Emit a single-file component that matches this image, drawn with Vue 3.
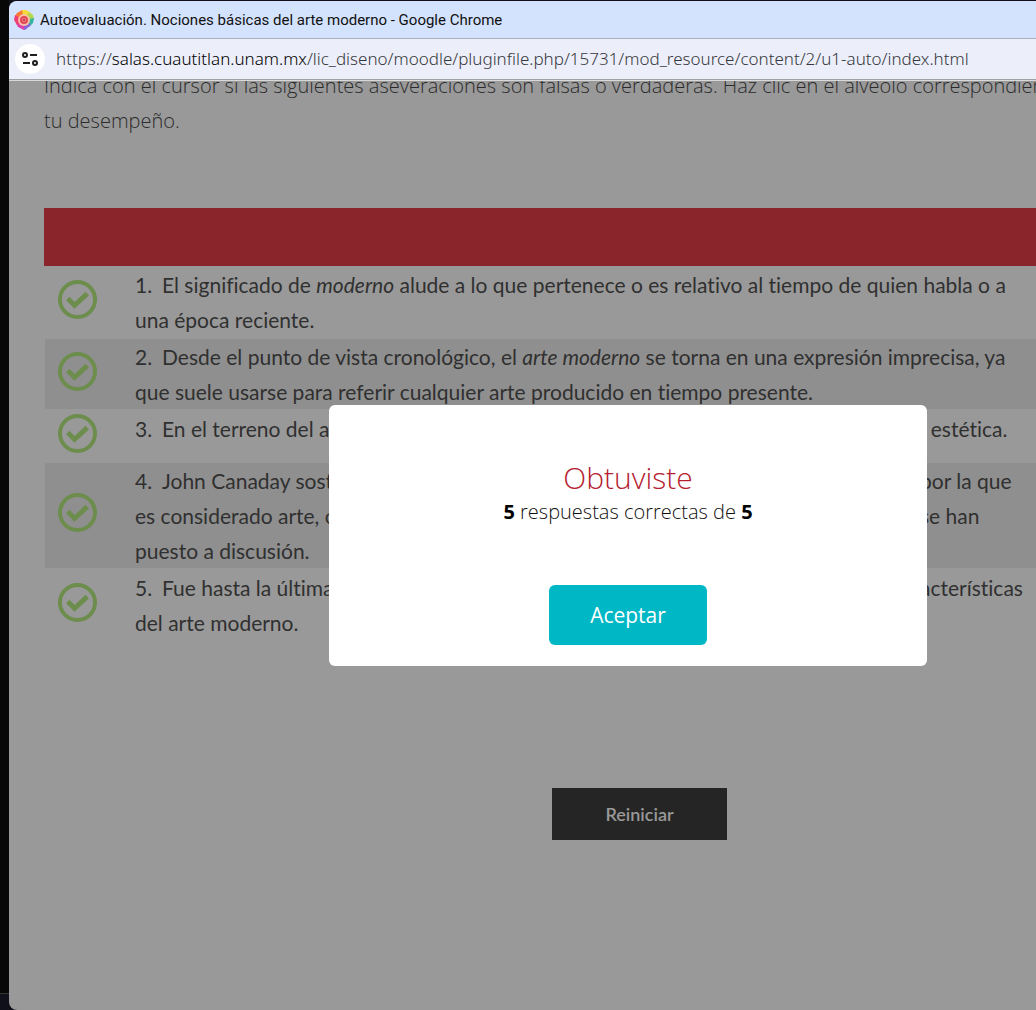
<script setup>
const questions = [
  {
    lines: [
      [{ t: 'El significado de ' }, { t: 'moderno', em: true }, { t: ' alude a lo que pertenece o es relativo al tiempo de quien habla o a' }],
      [{ t: 'una época reciente.' }],
    ],
  },
  {
    lines: [
      [{ t: 'Desde el punto de vista cronológico, el ' }, { t: 'arte moderno', em: true }, { t: ' se torna en una expresión imprecisa, ya' }],
      [{ t: 'que suele usarse para referir cualquier arte producido en tiempo presente.' }],
    ],
  },
  { lines: [[{ t: 'En el terreno del arte, lo moderno se refiere a una', tail: '\u00a0 estética.' }]] },
  {
    lines: [
      [{ t: 'John Canaday sostiene que el arte moderno es una etapa', tail: 'por la que' }],
      [{ t: 'es considerado arte, con los valores que en la época', tail: 'se han' }],
      [{ t: 'puesto a discusión.' }],
    ],
  },
  {
    lines: [
      [{ t: 'Fue hasta la última década cuando se definieron las car', tail: 'acterísticas' }],
      [{ t: 'del arte moderno.' }],
    ],
  },
]
</script>

<template>
  <div class="desktop">
    <div class="window">
      <header class="titlebar">
        <svg class="favicon" viewBox="0 0 20 20" aria-hidden="true">
          <path d="M10 10 1 6 3 3 8 0 11 1Z" fill="#fa7a38" />
          <path d="M10 10 8 0 12 0 17 3Z" fill="#f5d936" />
          <path d="M10 10 15 2 19 5 20 10Z" fill="#b4d84a" />
          <path d="M10 10 20 8 19 13 15 17Z" fill="#35b5a0" />
          <path d="M10 10 17 15 11 20 8 19Z" fill="#8a62d8" />
          <path d="M10 10 10 20 4 17 2 13Z" fill="#df3fa8" />
          <path d="M10 10 3 15 0 10 1 5Z" fill="#ee4074" />
          <circle cx="10" cy="10" r="6" fill="#f9c0a8" />
          <circle cx="10" cy="10" r="3" fill="#f28a8a" stroke="#e04656" stroke-width="2" />
          <circle cx="10" cy="10" r="1" fill="#b02838" />
        </svg>
        <span>Autoevaluación. Nociones básicas del arte moderno - Google Chrome</span>
      </header>
      <div class="addressbar">
        <button class="site" type="button" aria-label="Información del sitio">
          <svg viewBox="0 0 16 16" fill="none" stroke="#1f1f1f" stroke-width="2">
            <circle cx="3" cy="4" r="2" /><path d="M8 4h7M1 12h7" /><circle cx="13" cy="12" r="2" />
          </svg>
        </button>
        <span class="url">https://<b>salas.cuautitlan.unam.mx</b>/lic_diseno/moodle/pluginfile.php/15731/mod_resource/content/2/u1-auto/index.html</span>
      </div>

      <main class="page">
        <p class="intro">
          Indica con el cursor si las siguientes aseveraciones son falsas o verdaderas. Haz clic en el alveolo correspondiente<br>
          tu desempeño.
        </p>
        <div class="band"></div>
        <table class="quiz">
          <tbody>
            <tr v-for="(q, i) in questions" :key="i">
              <td class="mark">
                <svg viewBox="0 0 40 40" fill="none" stroke="#6c8d4c" role="img" aria-label="Correcto">
                  <circle cx="20" cy="20" r="18" stroke-width="4" />
                  <path d="M10 19 17 26 30 14" stroke-width="5" />
                </svg>
              </td>
              <td class="statement">
                <div v-for="(line, n) in q.lines" :key="n" class="line">
                  <span class="lead"><span v-if="n === 0" class="num">{{ i + 1 }}.</span><template v-for="(part, k) in line" :key="k"><em v-if="part.em">{{ part.t }}</em><template v-else>{{ part.t }}</template></template></span>
                  <span v-if="line[0].tail" class="tail">{{ line[0].tail }}</span>
                </div>
              </td>
            </tr>
          </tbody>
        </table>
        <button class="restart" type="button">Reiniciar</button>
      </main>
    </div>

    <section class="dialog" role="dialog" aria-labelledby="result">
      <h2 id="result">Obtuviste</h2>
      <p><strong>5</strong> respuestas correctas de <strong>5</strong></p>
      <button type="button">Aceptar</button>
    </section>
  </div>
</template>

<style>
body { margin: 0; background: #070707; }
</style>

<style scoped>
.desktop {
  position: relative;
  box-sizing: border-box;
  min-height: 100vh;
  padding: 1px 0 0 9px;
  display: flex;
  background: linear-gradient(#070707, #070707) 0 0 / 9px calc(100% - 17px) no-repeat, linear-gradient(#333, #333) 0 calc(100% - 16px) / 9px 1px no-repeat, #10101a;
  font-family: "Open Sans", "Noto Sans", sans-serif;
  overflow: hidden;
}
.window {
  flex: 1;
  min-width: 0;
  display: flex;
  flex-direction: column;
  border-radius: 8px 0 0 8px;
  overflow: hidden;
  background: #999;
}
.titlebar {
  height: 37px;
  display: flex;
  align-items: center;
  gap: 6px;
  padding-left: 5px;
  background: #d3e2fd;
  border-bottom: 1px solid #a9afbd;
  color: #111;
  font: 15px/20px Roboto, sans-serif;
  white-space: nowrap;
}
.favicon { width: 20px; height: 20px; }
.addressbar {
  height: 40px;
  display: flex;
  align-items: center;
  gap: 11px;
  padding-left: 6px;
  background: #eceef9;
  border-bottom: 1px solid #a0a0a4;
  color: #36393d;
  white-space: nowrap;
}
.site {
  flex: none;
  width: 30px;
  height: 30px;
  display: grid;
  place-items: center;
  padding: 0;
  border: 0;
  border-radius: 50%;
  background: #fff;
}
.site svg { width: 16px; height: 16px; }
.url { font: 300 17px/24px "Noto Sans", sans-serif; }
.url b { font-weight: 300; color: #000; }
.page {
  flex: 1;
  display: flex;
  flex-direction: column;
  padding-left: 35px;
  border-top: 1px solid #d8d8d8;
  color: #2b2b2b;
}
.intro {
  height: 57px;
  margin: 0 0 70px;
  display: flex;
  align-items: flex-end;
  overflow: hidden;
  font-size: 20px;
  font-weight: 300;
  line-height: 35px;
  white-space: nowrap;
}
.band { height: 58px; background: #8a252c; }
.quiz {
  margin: -1px 0 0 1px;
  border-spacing: 0 2px;
  table-layout: fixed;
  width: calc(100% - 1px);
  color: #303030;
  font: 21px/35px Lato, sans-serif;
  font-variant-ligatures: none;
}
.quiz td { padding: 0; }
.quiz tr:nth-child(even) { background: #8f8f8f; }
.quiz tr:nth-child(3) td { height: 50px; }
.mark { width: 90px; vertical-align: middle; }
.mark svg { display: block; width: 39px; height: 39px; margin: -6px 0 0 13px; }
.statement { vertical-align: top; }
.line { display: flex; height: 35px; white-space: pre; }
.lead { flex: 1; min-width: 0; overflow: hidden; }
.tail { width: 116px; }
.num { display: inline-block; width: 27px; }
.restart {
  width: 175px;
  height: 52px;
  margin: 146px 0 0 508px;
  border: 0;
  background: #252525;
  color: #999;
  font: 600 18px/24px Lato, sans-serif;
}
.dialog {
  position: absolute;
  top: 405px;
  left: 329px;
  box-sizing: border-box;
  width: 598px;
  padding: 55px 20px 21px;
  display: flex;
  flex-direction: column;
  align-items: center;
  border-radius: 6px;
  background: #fff;
  color: #111;
}
.dialog h2 { margin: 0; color: #b5202e; font-size: 30px; font-weight: 300; line-height: 36px; }
.dialog p { margin: 0 0 57px; font-size: 20px; font-weight: 300; line-height: 32px; }
.dialog strong { color: #000; font-weight: 700; }
.dialog button {
  width: 158px;
  height: 60px;
  border: 0;
  border-radius: 6px;
  background: #00b7c5;
  color: #fff;
  font: 400 21px/30px "Open Sans", sans-serif;
}
</style>
